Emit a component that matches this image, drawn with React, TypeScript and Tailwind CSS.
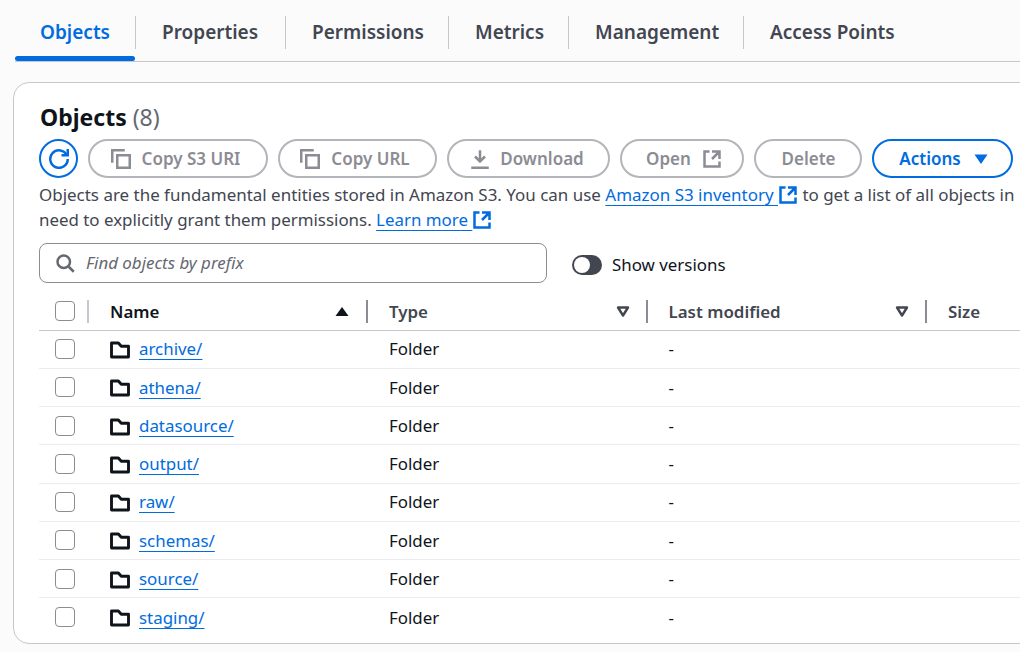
const font = { fontFamily: '"Noto Sans", sans-serif' };

function Ext({ className }: { className: string }) {
  return (
    <svg viewBox="0 0 16 16" className={className} fill="none" stroke="currentColor" strokeWidth="2">
      <path d="M14 8V2H8M14 2 8 8M6 2H2v12h12v-4" />
    </svg>
  );
}
function Copy() {
  return (
    <svg viewBox="0 0 16 16" className="w-5 h-5 shrink-0" fill="none" stroke="currentColor" strokeWidth="2">
      <path d="M1 11V1h10" />
      <path d="M5 5h10v10H5z" />
    </svg>
  );
}
function Btn({ children, w, extra = "gap-2" }: { children: React.ReactNode; w: string; extra?: string }) {
  return (
    <div className={`h-[39px] ${w} ${extra} shrink-0 rounded-full border-2 border-[#b4b4bb] text-[#8c8c94] font-semibold text-[17px] flex items-center justify-center`}>
      {children}
    </div>
  );
}
function Sep({ dark }: { dark?: boolean }) {
  return <div className={`w-[2px] h-[23px] ${dark ? "bg-[#8c8c94]" : "bg-[#c6c6cd]"}`} />;
}
function Box() {
  return <div className="w-5 h-5 rounded-[4px] border-[1.5px] border-[#8c8c94] bg-white" />;
}
function Caret() {
  return (
    <svg viewBox="0 0 16 16" className="w-4 h-4" fill="none" stroke="#424650" strokeWidth="2.4">
      <path d="M3 4.5h10L8 12.5z" strokeLinejoin="round" />
    </svg>
  );
}

const tabs = [
  ["Objects", "w-[121px]"],
  ["Properties", "w-[150px]"],
  ["Permissions", "w-[163px]"],
  ["Metrics", "w-[120px]"],
  ["Management", "w-[175px]"],
  ["Access Points", "w-[180px]"],
];
const rows = ["archive/", "athena/", "datasource/", "output/", "raw/", "schemas/", "source/", "staging/"];
const link = "text-[#006ce0] underline underline-offset-[4px] decoration-1 [text-decoration-skip-ink:none]";

export default function App() {
  return (
    <div style={font} className="w-[1020px] h-[652px] overflow-hidden bg-[#fbfbfc] text-[#424650] text-[16.9px]">
      <div className="ml-[15px] mr-[-20px] pt-4 h-[62px] border-b-[1.5px] border-[#c6c6cd] flex items-start relative">
        {tabs.map(([t, w], i) => (
          <div key={t} className={`${w} h-[33px] shrink-0 flex items-center text-[19px] font-semibold ${i === 0 ? "text-[#006ce0] pl-[25px]" : "text-[#424650] pl-[26px]"} ${i < 5 ? "border-r border-[#c6c6cd]" : ""}`}>
            {t}
          </div>
        ))}
        <div className="absolute left-0 top-[56px] w-[120px] h-[5px] rounded-full bg-[#006ce0]" />
      </div>

      <div className="ml-[13px] mt-5 w-[1100px] h-[562px] rounded-l-[16px] border border-[#c6c6cd] bg-white pl-[25px] pt-[17px]">
        <h2 className="text-[23px] leading-[34px] font-bold text-[#0f141a] pl-px">
          Objects <span className="font-normal text-[#656871]">(8)</span>
        </h2>
        <div className="mt-[5px] flex gap-[10px] h-[39px]">
          <div className="w-[39px] h-[39px] shrink-0 rounded-full border-2 border-[#006ce0] text-[#006ce0] flex items-center justify-center">
            <svg viewBox="0 0 16 16" className="w-5 h-5" fill="none" stroke="currentColor" strokeWidth="2">
              <path d="M10 5h5V0" />
              <path d="M15 8a7 7 0 1 1-.7-3" />
            </svg>
          </div>
          <Btn w="w-[180px]" extra="gap-[11px] pr-[5px]"><Copy />Copy S3 URI</Btn>
          <Btn w="w-[159px]" extra="gap-[11px] pr-[5px]"><Copy />Copy URL</Btn>
          <Btn w="w-[163px]" extra="gap-[10px] pr-[3px]">
            <svg viewBox="0 0 16 16" className="w-5 h-5" fill="none" stroke="currentColor" strokeWidth="2">
              <path d="M1 15h14M4 6l4 4 4-4M8 1v9" />
            </svg>
            Download
          </Btn>
          <Btn w="w-[124px]" extra="gap-[11px] pl-[4px]">Open<Ext className="w-5 h-5" /></Btn>
          <Btn w="w-[108px]" extra="pl-[1px]">Delete</Btn>
          <div className="h-[39px] w-[141px] shrink-0 rounded-full border-2 border-[#006ce0] text-[#006ce0] font-semibold text-[17px] flex items-center justify-center gap-3 pl-[3px]">
            Actions
            <svg viewBox="0 0 16 16" className="w-4 h-4" fill="currentColor">
              <path d="M1.5 3.5h13L8 13z" />
            </svg>
          </div>
        </div>
        <p className="mt-[4px] leading-[25px] whitespace-nowrap text-[16.97px]">
          Objects are the fundamental entities stored in Amazon S3. You can use{" "}
          <a className={link}>Amazon S3 inventory </a>
          <Ext className="inline w-5 h-5 text-[#006ce0] align-[-4px]" /> to get a list of all objects in
        </p>
        <p className="leading-[25px] whitespace-nowrap">
          need to explicitly grant them permissions.{" "}
          <a className={link}>Learn more </a>
          <Ext className="inline w-5 h-5 text-[#006ce0] align-[-4px]" />
        </p>

        <div className="mt-[11px] flex items-center">
          <div className="w-[508px] h-[40px] rounded-[8px] border border-[#8c8c94] flex items-center pl-[15px] gap-[11px]">
            <svg viewBox="0 0 16 16" className="w-5 h-5 text-[#656871]" fill="none" stroke="currentColor" strokeWidth="2">
              <circle cx="7" cy="7" r="5" />
              <path d="m11 11 4 4" />
            </svg>
            <span className="italic text-[#656871]">Find objects by prefix</span>
          </div>
          <div className="ml-[25px] w-[30px] h-5 rounded-full bg-[#424650] p-[2px] mt-[3px]">
            <div className="w-4 h-4 rounded-full bg-white" />
          </div>
          <span className="ml-[10px] text-[#0f141a] mt-[3px]">Show versions</span>
        </div>

        <div className="mt-[9px] h-[38.5px] pt-[1px] flex items-center border-b-[1.5px] border-[#c6c6cd] font-semibold">
          <div className="w-[50px] pl-4 flex items-center justify-between pr-0"><Box /><Sep /></div>
          <div className="w-[279px] pl-[21px] flex items-center justify-between text-[#0f141a]">
            Name
            <div className="flex items-center gap-[16px]">
              <svg viewBox="0 0 16 16" className="w-4 h-4" fill="#0f141a"><path d="M1.5 13 8 4l6.5 9z" /></svg>
              <Sep dark />
            </div>
          </div>
          <div className="w-[279.5px] pl-[21px] flex items-center justify-between">
            Type
            <div className="flex items-center gap-[15px]"><Caret /><Sep dark /></div>
          </div>
          <div className="w-[279.5px] pl-[21px] flex items-center justify-between">
            Last modified
            <div className="flex items-center gap-[15px]"><Caret /><Sep dark /></div>
          </div>
          <div className="pl-[21px]">Size</div>
        </div>

        {rows.map((r, i) => (
          <div key={r} className={`h-[38.25px] flex items-center text-[#0f141a] ${i < 7 ? "border-b border-[#ebebf0]" : ""}`}>
            <div className="w-[50px] pl-4"><Box /></div>
            <div className="w-[279px] pl-[21px] flex items-center gap-[9px]">
              <svg viewBox="0 0 16 16" className="w-5 h-5 mt-[2px]" fill="none" stroke="#0f141a" strokeWidth="2.3">
                <path d="M1.2 13.6V2.4h5.5L9 5h5.8v8.6z" strokeLinejoin="round" />
              </svg>
              <a className={link}>{r}</a>
            </div>
            <div className="w-[279.5px] pl-[21px]">Folder</div>
            <div className="pl-[21px]">-</div>
          </div>
        ))}
      </div>
    </div>
  );
}
